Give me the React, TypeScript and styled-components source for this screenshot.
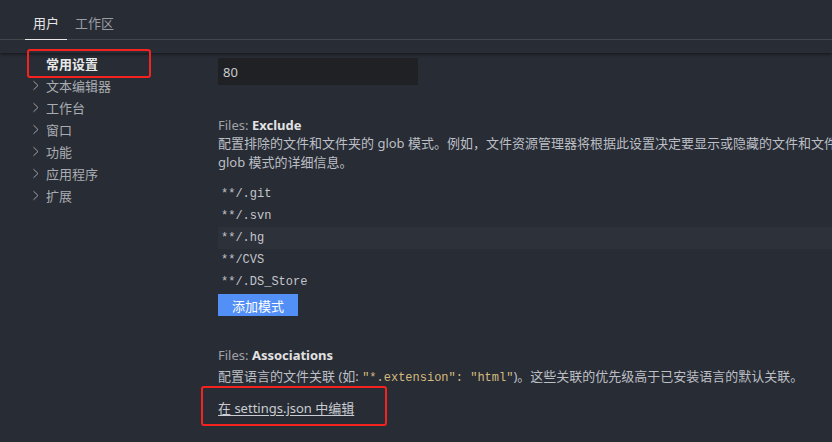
import React from "react";
import styled, { createGlobalStyle } from "styled-components";

const Global = createGlobalStyle`
  html, body { margin: 0; padding: 0; background: #282c34; }
  * { box-sizing: border-box; }
`;

const SANS = `"Noto Sans", "Noto Sans CJK SC", sans-serif`;
const MONO = `"Liberation Mono", "DejaVu Sans Mono", monospace`;

const Page = styled.div`
  position: relative;
  width: 832px;
  height: 442px;
  overflow: hidden;
  background: #282c34;
  font-family: ${SANS};
  font-size: 13px;
  color: #b8bbc1;
`;

const Header = styled.div`
  height: 53px;
  position: relative;
  z-index: 1;
  box-shadow: 0 1px 3px rgba(0, 0, 0, 0.55);
`;

const TabBar = styled.div`
  display: flex;
  height: 40px;
  padding-left: 25px;
  box-shadow: inset 0 -1px 0 #43474e;
`;

const Tab = styled.div<{ $active?: boolean }>`
  display: flex;
  align-items: center;
  height: 40px;
  padding: 6px 8px 0;
  border-bottom: 1px solid ${(p) => (p.$active ? "#e6e6e6" : "transparent")};
  color: ${(p) => (p.$active ? "#e6e6e6" : "#9a9da3")};
  font-size: 13px;
`;

const Body = styled.div`
  display: flex;
  height: 389px;
`;

const Sidebar = styled.div`
  width: 218px;
  flex: none;
`;

const TreeRow = styled.div<{ $bold?: boolean }>`
  display: flex;
  align-items: center;
  height: 22px;
  padding-left: 32px;
  padding-bottom: 2px;
  gap: 6px;
  color: ${(p) => (p.$bold ? "#e8e8e8" : "#a9acb2")};
  font-weight: ${(p) => (p.$bold ? 700 : 400)};
`;

const ChevronBox = styled.span`
  display: inline-flex;
  width: 8px;
  height: 20px;
  align-items: center;
`;

const Content = styled.div`
  flex: 1;
  min-width: 0;
  padding-top: 5px;
`;

const NumberInput = styled.div`
  width: 200px;
  height: 27px;
  background: #1f2125;
  color: #c9ccd1;
  display: flex;
  align-items: center;
  padding-left: 5px;
  font-size: 13px;
`;

const Section = styled.div<{ $top: number }>`
  margin-top: ${(p) => p.$top}px;
`;

const Title = styled.div`
  line-height: 18px;
  color: #a0a3a8;
  white-space: nowrap;
  b {
    color: #e3e3e3;
    font-weight: 700;
  }
`;

const Description = styled.div<{ $top?: number }>`
  margin-top: ${(p) => p.$top ?? 0}px;
  line-height: 19px;
  color: #bcbfc5;
`;

const Line = styled.span`
  display: block;
  white-space: nowrap;
`;

const Code = styled.code`
  font-family: ${MONO};
  font-size: 12px;
  color: #d5bb80;
`;

const PatternList = styled.div`
  margin-top: 11px;
`;

const PatternRow = styled.div<{ $hover?: boolean }>`
  height: 22px;
  display: flex;
  align-items: center;
  padding-left: 3px;
  font-family: ${MONO};
  font-size: 12px;
  color: #c3c6cc;
  background: ${(p) => (p.$hover ? "#2d3139" : "transparent")};
`;

const Button = styled.div`
  margin-top: 1px;
  width: 80px;
  height: 22px;
  background: #528ff6;
  color: #ffffff;
  display: flex;
  align-items: center;
  justify-content: center;
  font-size: 13px;
`;

const Link = styled.a`
  display: inline-block;
  margin-top: 11px;
  line-height: 18px;
  color: #c9ccd2;
  text-decoration: underline;
  text-underline-offset: 2px;
`;

const Annotation = styled.div<{ $x: number; $y: number; $w: number; $h: number }>`
  position: absolute;
  left: ${(p) => p.$x}px;
  top: ${(p) => p.$y}px;
  width: ${(p) => p.$w}px;
  height: ${(p) => p.$h}px;
  border: 2.5px solid #f5231f;
  border-radius: 3px;
  pointer-events: none;
  z-index: 5;
`;

const Chevron = () => (
  <ChevronBox>
    <svg width="8" height="11" viewBox="0 0 8 11">
      <path d="M1.5 1.2 L6 5.5 L1.5 9.8" fill="none" stroke="#a0a3a8" strokeWidth="1" />
    </svg>
  </ChevronBox>
);

const tree = ["文本编辑器", "工作台", "窗口", "功能", "应用程序", "扩展"];
const patterns = ["**/.git", "**/.svn", "**/.hg", "**/CVS", "**/.DS_Store"];

export default function App() {
  return (
    <Page>
      <Global />
      <Header>
        <TabBar>
          <Tab $active>用户</Tab>
          <Tab>工作区</Tab>
        </TabBar>
      </Header>
      <Body>
        <Sidebar>
          <TreeRow $bold>
            <ChevronBox />
            常用设置
          </TreeRow>
          {tree.map((t) => (
            <TreeRow key={t}>
              <Chevron />
              {t}
            </TreeRow>
          ))}
        </Sidebar>
        <Content>
          <NumberInput>80</NumberInput>
          <Section $top={31}>
            <Title>
              Files: <b>Exclude</b>
            </Title>
            <Description>
              <Line>
                配置排除的文件和文件夹的 glob 模式。例如，文件资源管理器将根据此设置决定要显示或隐藏的文件和文件夹。可在此处阅读有关
              </Line>
              <Line>glob 模式的详细信息。</Line>
            </Description>
            <PatternList>
              {patterns.map((p, i) => (
                <PatternRow key={p} $hover={i === 2}>
                  {p}
                </PatternRow>
              ))}
            </PatternList>
            <Button>添加模式</Button>
          </Section>
          <Section $top={30}>
            <Title>
              Files: <b>Associations</b>
            </Title>
            <Description $top={3}>
              <Line>
                配置语言的文件关联 (如: <Code>"*.extension": "html"</Code>)。这些关联的优先级高于已安装语言的默认关联。
              </Line>
            </Description>
            <Link>在 settings.json 中编辑</Link>
          </Section>
        </Content>
      </Body>
      <Annotation $x={27} $y={49} $w={124} $h={29} />
      <Annotation $x={201} $y={386} $w={186} $h={40} />
    </Page>
  );
}
